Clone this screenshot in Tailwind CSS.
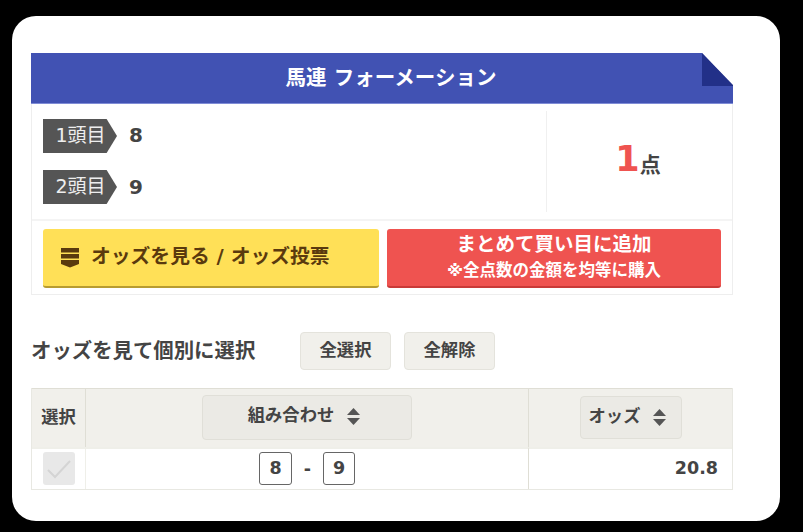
<!DOCTYPE html>
<html lang="ja">
<head>
<meta charset="utf-8">
<script src="https://cdn.jsdelivr.net/npm/@tailwindcss/browser@4"></script>
</head>
<body class="bg-black w-[803px] h-[532px] overflow-hidden font-['DejaVu_Sans','Noto_Sans_CJK_JP',sans-serif] text-[#444]">
<div class="ml-3 mt-4 w-[768px] h-[505px] bg-white rounded-[24px] pt-[37px] px-[19px]">
  <div class="w-[702px]">
    <div class="relative h-[51px] bg-[#4152b3] border-b border-[#7f8cd6] flex items-center justify-center text-white text-[20.500px] font-bold">
      <span class="pl-[18px] leading-[26px] mb-[1px]">馬連 フォーメーション</span>
      <svg class="absolute right-0 top-0" width="31" height="33" viewBox="0 0 31 33"><polygon points="0,0 31,0 31,33" fill="#fff"/><polygon points="0,0 31,32 31,33 0,33" fill="#223088"/></svg>
    </div>
    <div class="border-x border-b border-[#eeeeee]">
      <div class="flex h-[117px] border-b-2 border-[#f4f4f4] py-[7px]">
        <div class="w-[515px] pl-[11px] pt-2 flex flex-col gap-[17px] border-r border-[#f0f0f0]">
          <div class="flex items-center gap-3">
            <div class="w-[74px] h-[34px] bg-[#555] text-[#eee] text-[19px] flex items-center justify-center pl-[1px] [clip-path:polygon(0_0,86%_0,100%_50%,86%_100%,0_100%)]"><span class="mb-[2px]">1頭目</span></div>
            <span class="text-[20px] font-bold mb-[3px]">8</span>
          </div>
          <div class="flex items-center gap-3">
            <div class="w-[74px] h-[34px] bg-[#555] text-[#eee] text-[19px] flex items-center justify-center pl-[1px] [clip-path:polygon(0_0,86%_0,100%_50%,86%_100%,0_100%)]"><span class="mb-[2px]">2頭目</span></div>
            <span class="text-[20px] font-bold">9</span>
          </div>
        </div>
        <div class="flex-1 flex items-center justify-center font-bold pr-[3px]">
          <span class="text-[35px] leading-none text-[#ef5350] mb-1">1</span><span class="text-[21px] mt-2">点</span>
        </div>
      </div>
      <div class="flex gap-2 pl-[11px] pt-2 pb-[6px] font-bold">
        <div class="w-[336px] h-[59px] rounded-[3px] bg-[#ffe057] border-b-2 border-[#b89c30] flex items-center pl-[18px] gap-[12px] text-[#5a3a0e] text-[19.800px]">
          <svg width="18" height="20" viewBox="0 0 18 20"><path d="M0 0h18v4.500H0zM0 6h18v4.500H0zM0 12h18v4l-9 3.500L0 16z" fill="#5a3a0e"/></svg>
          <span class="mb-[1px] whitespace-nowrap">オッズを見る / オッズ投票</span>
        </div>
        <div class="w-[334px] h-[59px] rounded-[3px] bg-[#ef5350] border-b-2 border-[#c93a38] flex flex-col items-center justify-center text-white">
          <span class="text-[19.500px] leading-[26px] mb-[1px]">まとめて買い目に追加</span>
          <span class="text-[16.500px] leading-[24px] whitespace-nowrap">※全点数の金額を均等に購入</span>
        </div>
      </div>
    </div>
    <div class="mt-[37px] flex items-center h-[38px] font-bold">
      <span class="w-[269px] text-[20.400px] whitespace-nowrap">オッズを見て個別に選択</span>
      <div class="w-[91px] h-[38px] rounded-[4px] bg-[#f1f0eb] border border-[#e4e3dc] text-[17.300px] flex items-center justify-center"><span class="mb-[1px]">全選択</span></div>
      <div class="ml-[13px] w-[91px] h-[38px] rounded-[4px] bg-[#f1f0eb] border border-[#e4e3dc] text-[17.300px] flex items-center justify-center"><span class="mb-[1px]">全解除</span></div>
    </div>
    <div class="mt-[18px] grid grid-cols-[54px_442px_204px] border-x border-b border-[#e8e8e2] font-bold">
      <div class="h-[59px] bg-[#f1f0eb] border-t border-[#dfded5] border-r flex items-center justify-center text-[17.300px]"><span>選択</span></div>
      <div class="h-[59px] bg-[#f1f0eb] border-t border-[#dfded5] flex items-center justify-center">
        <div class="w-[210px] h-[45px] mb-[2px] rounded-[4px] bg-[#ebeae5] border border-[#e0dfd8] flex items-center justify-center gap-[13px] pr-[6px] text-[17.300px]">
          <span class="mb-[2px]">組み合わせ</span>
          <svg class="mb-[1px]" width="13" height="17" viewBox="0 0 13 17"><path d="M6.500 0L13 7H0z" fill="#555"/><path d="M0 10h13L6.500 17z" fill="#555"/></svg>
        </div>
      </div>
      <div class="h-[59px] bg-[#f1f0eb] border-t border-l border-[#dfded5] flex items-center justify-center">
        <div class="w-[102px] h-[43px] mb-[1px] rounded-[4px] bg-[#ebeae5] border border-[#e0dfd8] flex items-center justify-center gap-[13px] pr-[6px] text-[17.300px]">
          <span class="mb-[1px]">オッズ</span>
          <svg class="mb-[1px]" width="13" height="17" viewBox="0 0 13 17"><path d="M6.500 0L13 7H0z" fill="#555"/><path d="M0 10h13L6.500 17z" fill="#555"/></svg>
        </div>
      </div>
      <div class="h-[42px] border-r border-t-2 border-[#efefe9] flex items-center justify-center">
        <div class="w-[32px] h-[33px] mb-[1px] rounded-[3px] bg-[#e8e8e8] flex items-center justify-center">
          <svg width="26" height="22" viewBox="0 0 26 22"><path d="M2 12l7 7L24 3" fill="none" stroke="#d4d4d4" stroke-width="2"/></svg>
        </div>
      </div>
      <div class="h-[42px] border-t-2 border-[#efefe9] flex items-center justify-center gap-[10px] text-[17.500px]">
        <span class="w-[33px] h-[33px] mb-[1px] rounded-[3px] border border-[#666] flex items-center justify-center">8</span>
        <span class="w-[11px] text-center">-</span>
        <span class="w-[32px] h-[33px] mb-[1px] rounded-[3px] border border-[#666] flex items-center justify-center">9</span>
      </div>
      <div class="h-[42px] border-t-2 border-l border-t-[#efefe9] border-l-[#dfded5] flex items-center justify-end pr-[14px] pb-[2px] text-[17.500px]">20.8</div>
    </div>
  </div>
</div>
</body>
</html>
